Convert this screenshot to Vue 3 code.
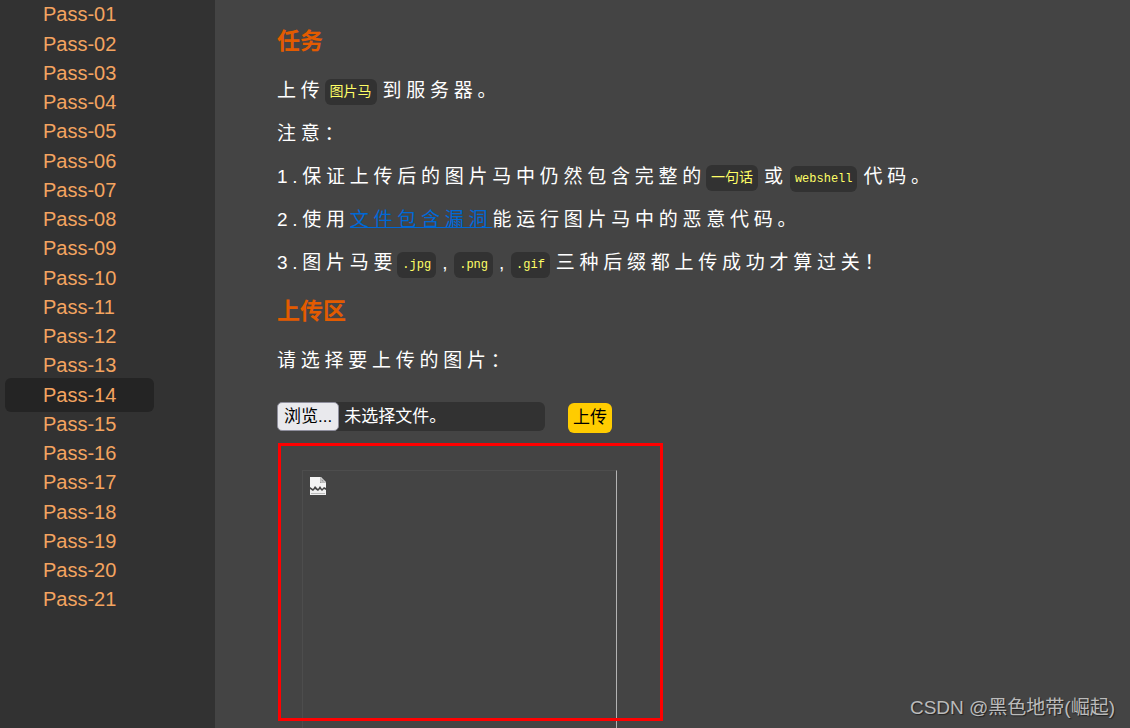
<script setup>
import { ref } from 'vue'

const lessons = Array.from({ length: 21 }, (_, i) => `Pass-${String(i + 1).padStart(2, '0')}`)
const active = ref('Pass-14')
</script>

<template>
  <div class="page">
    <nav class="sidebar" aria-label="关卡">
      <ul class="lessons">
        <li v-for="name in lessons" :key="name">
          <a href="#" :class="{ active: name === active }" @click.prevent="active = name">{{ name }}</a>
        </li>
      </ul>
    </nav>

    <main class="content">
      <h3>任务</h3>
      <p>上传<code>图片马</code>到服务器。</p>
      <p>注意：</p>
      <p>1.保证上传后的图片马中仍然包含完整的<code>一句话</code>或<code class="latin">webshell</code>代码。</p>
      <p>2.使用<a class="link" href="#">文件包含漏洞</a>能运行图片马中的恶意代码。</p>
      <p>3.图片马要<code class="latin">.jpg</code>,<code class="latin">.png</code>,<code class="latin">.gif</code>三种后缀都上传成功才算过关！</p>

      <h3>上传区</h3>
      <form @submit.prevent>
        <p>请选择要上传的图片：</p>
        <div class="upload">
          <label class="picker" for="upload-file">
            <span class="browse">浏览...</span>
            <span class="filename">未选择文件。</span>
            <input id="upload-file" class="file" type="file" />
          </label>
          <button class="submit" type="submit">上传</button>
        </div>
      </form>

      <div class="result">
        <div class="preview">
          <svg class="broken" width="16" height="18" viewBox="0 0 16 18" aria-hidden="true">
            <path d="M0 0H11L16 5V11L14 10L12 12L10 9L8 12L5 9L3 12L0 10Z" fill="#f4f4f4" />
            <path d="M10 0L16 6H10Z" fill="#9a9a9a" />
            <path d="M11 1V5H15" fill="none" stroke="#ddd" />
            <path d="M0 12L3 14L5 12L8 14L10 12L12 14L14 12L16 13V18H0Z" fill="#f0f0f0" />
            <path d="M1 16.5H15" stroke="#bbb" />
          </svg>
        </div>
        <div class="highlight"></div>
      </div>
    </main>

    <div class="watermark">CSDN @黑色地带(崛起)</div>
  </div>
</template>

<style>
body {
  margin: 0;
  background: #444;
}
</style>

<style scoped>
.page {
  position: relative;
  display: flex;
  height: 100vh;
  overflow: hidden;
  background: #444;
  color: #fff;
  font-family: "Liberation Sans", "Noto Sans CJK SC", sans-serif;
}

.sidebar {
  flex: 0 0 215px;
  background: #323232;
}

.lessons {
  margin: 0;
  padding: 0 0 0 5px;
  list-style: none;
  font-size: 20px;
  line-height: 29px;
}

.lessons li:nth-child(4n + 1) {
  margin-bottom: 1px;
}

.lessons a {
  padding: 6px 38px;
  border-radius: 6px;
  color: #f4a460;
  text-decoration: none;
}

.lessons a.active {
  background: #242424;
}

.content {
  flex: 1;
  min-width: 0;
  padding: 24px 62px 0;
}

h3 {
  margin: 0 0 20px;
  color: #e35b00;
  font-size: 23px;
  line-height: 34px;
}

p {
  margin: 0 0 17px;
  font-size: 19px;
  line-height: 26px;
  letter-spacing: 0.25em;
}

p + h3 {
  margin-top: 18px;
}

code {
  margin-right: 6px;
  padding: 5px;
  border-radius: 6px;
  background: #323232;
  color: #ff6;
  font-family: "Liberation Mono", "Noto Sans CJK SC", monospace;
  font-size: 14px;
  line-height: 14px;
  letter-spacing: 0;
  vertical-align: 1px;
}

code.latin {
  padding: 6px 5px;
  font-size: 12px;
}

code + code.latin {
  margin-left: 2px;
}

.link {
  color: #0068d6;
  text-decoration: underline;
}

.upload {
  display: flex;
  gap: 23px;
  margin-top: 28px;
}

.picker {
  position: relative;
  display: flex;
  align-items: center;
  width: 268px;
  height: 29px;
  border-radius: 6px;
  background: #323232;
  font-size: 17px;
  line-height: 27px;
}

.browse {
  padding: 0 6px;
  border: 1px solid #8f8f9d;
  border-radius: 5px;
  background: #e9e9ed;
  color: #000;
}

.filename {
  padding-left: 5px;
}

.file {
  position: absolute;
  inset: 0;
  width: 100%;
  opacity: 0;
}

.submit {
  margin: 1px 0 0;
  padding: 0 5px;
  border: 0;
  border-radius: 6px;
  background: #fc0;
  color: #000;
  font-family: inherit;
  font-size: 17px;
  line-height: 30px;
}

.result {
  position: relative;
  padding: 37px 25px;
}

.preview {
  width: 315px;
  height: 315px;
  border: 1px solid;
  border-color: #4d4d4d #b3b3b3 #b3b3b3 #4d4d4d;
  box-sizing: border-box;
  padding: 6px 7px;
}

.broken {
  display: block;
}

.highlight {
  position: absolute;
  top: 10px;
  left: 1px;
  width: 379px;
  height: 272px;
  border: 3px solid #f00;
}

.watermark {
  position: absolute;
  right: 15px;
  bottom: 6px;
  color: #bbb;
  font-size: 19px;
  line-height: 28px;
  text-shadow: 1px 1px 1px #222;
}
</style>
